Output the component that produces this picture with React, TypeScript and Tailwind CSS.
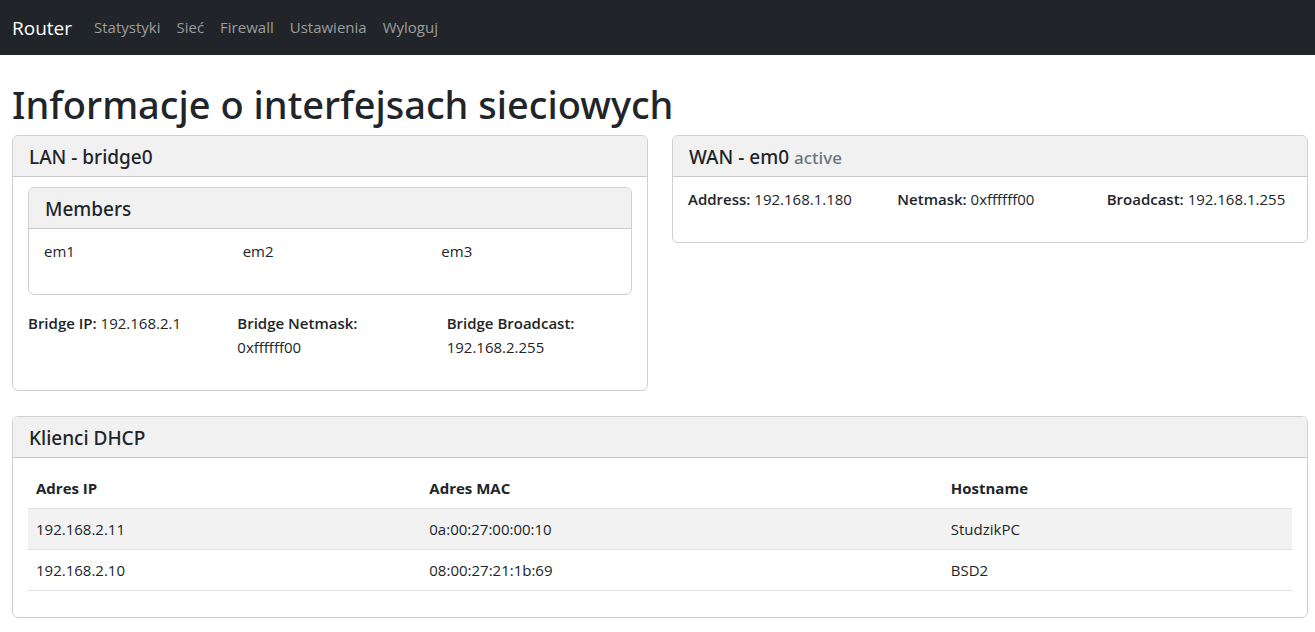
import type { ReactNode } from "react";

const navLinks = ["Statystyki", "Sieć", "Firewall", "Ustawienia", "Wyloguj"];

const clients = [
  { ip: "192.168.2.11", mac: "0a:00:27:00:00:10", host: "StudzikPC" },
  { ip: "192.168.2.10", mac: "08:00:27:21:1b:69", host: "BSD2" },
];

function Card({ title, children }: { title: ReactNode; children: ReactNode }) {
  return (
    <section className="overflow-hidden rounded-md border border-[#d0d0d0] bg-white">
      <h2 className="border-b border-[#c8c8c8] bg-[#f1f1f1] px-4 pt-[9px] pb-[7px] font-['Noto_Sans',sans-serif] text-[19px] leading-6 font-medium">
        {title}
      </h2>
      <div className="px-[15px] pt-[10px]">{children}</div>
    </section>
  );
}

function Field({ label, value }: { label: string; value: string }) {
  return (
    <p>
      <strong className="font-semibold">{label}:</strong> {value}
    </p>
  );
}

export default function App() {
  return (
    <div className="min-h-screen bg-white font-['Open_Sans',sans-serif] text-[15px] leading-6 text-[#212529]">
      <nav className="flex h-[55px] items-center bg-[#212529] px-3">
        <a href="#" className="mr-[22px] text-[19px] text-white">Router</a>
        <ul className="flex gap-4 pb-0.5">
          {navLinks.map((link) => (
            <li key={link}>
              <a href="#" className="text-[#9b9d9e]">{link}</a>
            </li>
          ))}
        </ul>
      </nav>

      <main className="pt-6 pr-[7px] pb-3 pl-3">
        <h1 className="mb-1.5 font-['Noto_Sans',sans-serif] text-[38px] leading-[50px] font-medium">
          Informacje o interfejsach sieciowych
        </h1>

        <div className="grid grid-cols-2 items-start gap-6">
          <Card title="LAN - bridge0">
            <Card title="Members">
              <div className="grid grid-cols-3 gap-6 pb-[31px]">
                <p>em1</p>
                <p>em2</p>
                <p>em3</p>
              </div>
            </Card>
            <div className="grid grid-cols-3 gap-6 pt-4 pb-[31px]">
              <Field label="Bridge IP" value="192.168.2.1" />
              <Field label="Bridge Netmask" value="0xffffff00" />
              <Field label="Bridge Broadcast" value="192.168.2.255" />
            </div>
          </Card>

          <Card title={<>WAN - em0 <small className="text-[17px] leading-none text-[#6c757d]">active</small></>}>
            <div className="grid grid-cols-3 gap-6 pb-[31px]">
              <Field label="Address" value="192.168.1.180" />
              <Field label="Netmask" value="0xffffff00" />
              <Field label="Broadcast" value="192.168.1.255" />
            </div>
          </Card>
        </div>

        <div className="mt-[25px]">
          <Card title="Klienci DHCP">
            <table className="mb-[26px] w-full border-collapse text-left">
              <thead>
                <tr className="border-b border-[#dee2e6]">
                  <th scope="col" className="p-2 font-bold">Adres IP</th>
                  <th scope="col" className="p-2 font-bold">Adres MAC</th>
                  <th scope="col" className="p-2 font-bold">Hostname</th>
                </tr>
              </thead>
              <tbody>
                {clients.map((client) => (
                  <tr key={client.ip} className="border-b border-[#dee2e6] odd:bg-[#f2f2f2]">
                    <td className="p-2">{client.ip}</td>
                    <td className="p-2">{client.mac}</td>
                    <td className="p-2">{client.host}</td>
                  </tr>
                ))}
              </tbody>
            </table>
          </Card>
        </div>
      </main>
    </div>
  );
}
